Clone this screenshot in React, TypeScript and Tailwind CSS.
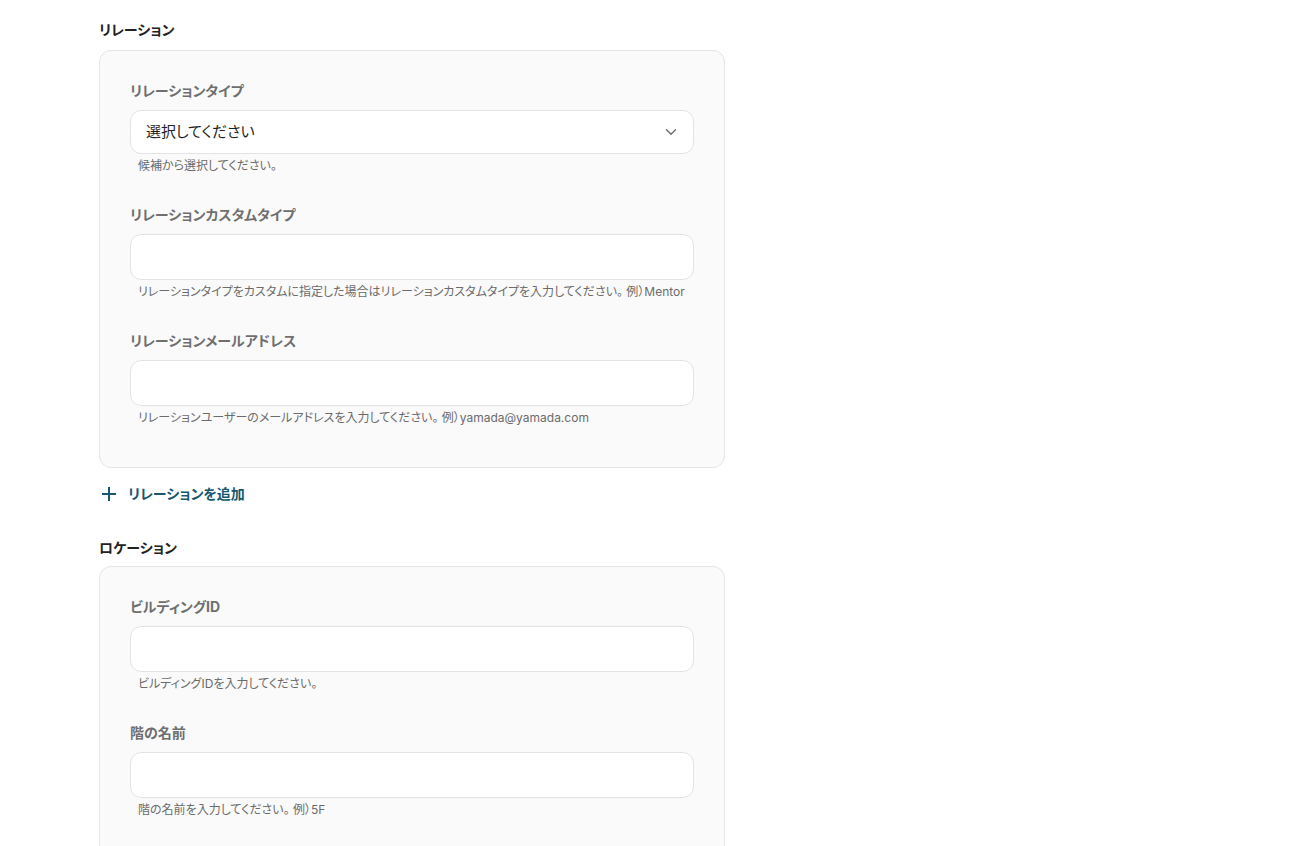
import React from 'react';

const font = { fontFamily: '"Inter", "Noto Sans CJK JP", sans-serif' };

interface FieldProps {
  label: string;
  help: string;
  select?: boolean;
}

function Field({ label, help, select }: FieldProps) {
  return (
    <div>
      <label className="block text-sm leading-5 font-bold text-[#6f6f6f] mb-[9px]">{label}</label>
      {select ? (
        <div className="flex items-center justify-between h-[44px] px-[15px] bg-white border border-[#e3e3e3] rounded-[11px]">
          <span className="text-[15px] text-[#1f1f1f]">選択してください</span>
          <svg width="12" height="8" viewBox="0 0 12 8" fill="none" className="mr-[1px]">
            <path d="M1.5 1.8 6 6.2l4.5-4.4" stroke="#6b6b6b" strokeWidth="1.4" strokeLinecap="round" strokeLinejoin="round" />
          </svg>
        </div>
      ) : (
        <input
          type="text"
          className="block w-full h-[46px] px-[15px] bg-white border border-[#e3e3e3] rounded-[11px] outline-none"
        />
      )}
      <p className="mt-1 pl-2 text-xs leading-4 text-[#6b6b6b] whitespace-nowrap">{help}</p>
    </div>
  );
}

function Section({ title, gap, children }: { title: string; gap: string; children: React.ReactNode }) {
  return (
    <section>
      <h2 className={`text-sm leading-5 font-bold text-[#222] ${gap}`}>{title}</h2>
      <div className="bg-[#fafafa] border border-[#e5e5e5] rounded-xl pl-[30px] pr-[30px] pt-[30px] pb-[41px] flex flex-col gap-[31px]">
        {children}
      </div>
    </section>
  );
}

export default function App() {
  return (
    <div className="min-h-screen bg-white [font-feature-settings:'palt']" style={font}>
      <div className="w-[626px] ml-[99px] pt-5">
        <Section title="リレーション" gap="mb-[10px]">
          <Field label="リレーションタイプ" help="候補から選択してください。" select />
          <Field
            label="リレーションカスタムタイプ"
            help="リレーションタイプをカスタムに指定した場合はリレーションカスタムタイプを入力してください。 例）Mentor"
          />
          <Field
            label="リレーションメールアドレス"
            help="リレーションユーザーのメールアドレスを入力してください。 例）yamada@yamada.com"
          />
        </Section>

        <button className="flex items-center gap-[12px] mt-[16px] pl-[3px] h-5 text-sm font-bold text-[#16586f]">
          <svg width="14" height="14" viewBox="0 0 14 14" fill="none">
            <path d="M7 1v12M1 7h12" stroke="#16586f" strokeWidth="2" strokeLinecap="square" />
          </svg>
          リレーションを追加
        </button>

        <div className="mt-[34px]">
          <Section title="ロケーション" gap="mb-[8px]">
            <Field label="ビルディングID" help="ビルディングIDを入力してください。" />
            <Field label="階の名前" help="階の名前を入力してください。 例）5F" />
          </Section>
        </div>
      </div>
    </div>
  );
}
